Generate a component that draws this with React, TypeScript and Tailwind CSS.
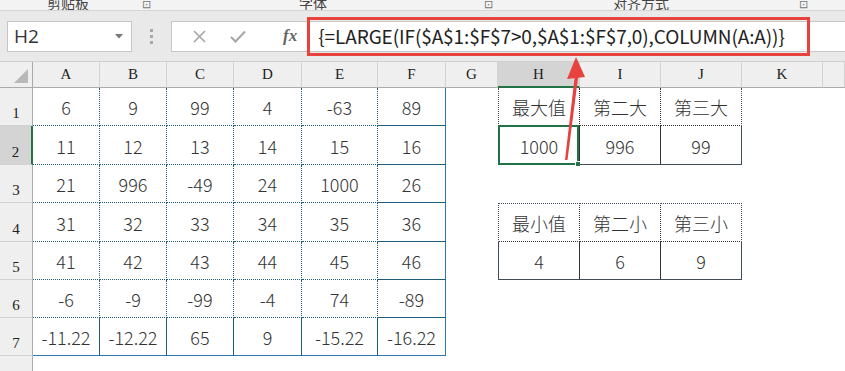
import React from "react";

const cols = ["A", "B", "C", "D", "E", "F", "G", "H", "I", "J", "K", ""];

const data = [
  ["6", "9", "99", "4", "-63", "89"],
  ["11", "12", "13", "14", "15", "16"],
  ["21", "996", "-49", "24", "1000", "26"],
  ["31", "32", "33", "34", "35", "36"],
  ["41", "42", "43", "44", "45", "46"],
  ["-6", "-9", "-99", "-4", "74", "-89"],
  ["-11.22", "-12.22", "65", "9", "-15.22", "-16.22"],
];

// right side summary tables, keyed by row index (0 based)
const side: Record<number, string[]> = {
  0: ["最大值", "第二大", "第三大"],
  1: ["1000", "996", "99"],
  3: ["最小值", "第二小", "第三小"],
  4: ["4", "6", "9"],
};

const rowHeights = ["h-[38px]", "h-[39px]", "h-[38px]", "h-[39px]", "h-[38px]", "h-[38px]", "h-[38px]"];

const cellFont = "font-['Noto_Sans_CJK_SC','Noto_Sans',sans-serif] font-light text-[18px] text-[#333]";
const headFont = "font-['Liberation_Serif','DejaVu_Serif',serif] text-[15px] text-[#222]";

function Ribbon() {
  return (
    <div className="flex h-[11px] items-end overflow-hidden border-b border-[#d6d6d6] bg-[#f3f3f3] text-[14px] leading-[18px] text-[#444] font-['Noto_Sans_CJK_SC',sans-serif]">
      <span className="ml-[47px] -mb-[2px]">剪贴板</span>
      <span className="ml-[53px] -mb-[2px] text-[11px] text-[#777]">⊡</span>
      <span className="ml-[148px] -mb-[2px]">字体</span>
      <span className="ml-[157px] -mb-[2px] text-[11px] text-[#777]">⊡</span>
      <span className="ml-[120px] -mb-[2px]">对齐方式</span>
      <span className="ml-[130px] -mb-[2px] text-[11px] text-[#777]">⊡</span>
    </div>
  );
}

function FormulaBar() {
  return (
    <div className="flex h-[51px] items-center border-b border-[#d0d0d0] bg-[#e9e9e9]">
      <div className="ml-[7px] flex h-[31px] w-[125px] items-center justify-between border border-[#c6c6c6] bg-white pl-[6px] pr-[8px]">
        <span className="font-['Open_Sans',sans-serif] text-[19px] text-[#333]">H2</span>
        <svg width="8" height="5" viewBox="0 0 8 5">
          <path d="M0 0 L8 0 L4 4.5 Z" fill="#777" />
        </svg>
      </div>
      <div className="ml-[18px] flex flex-col gap-[3px]">
        <span className="h-[3px] w-[3px] bg-[#a8a8a8]" />
        <span className="h-[3px] w-[3px] bg-[#a8a8a8]" />
        <span className="h-[3px] w-[3px] bg-[#a8a8a8]" />
      </div>
      <div className="ml-[18px] flex h-[31px] flex-1 items-center border border-y-[#c6c6c6] border-l-[#c6c6c6] border-r-0 bg-white">
        <svg className="ml-[21px]" width="13" height="13" viewBox="0 0 13 13">
          <path d="M1 1 L12 12 M12 1 L1 12" stroke="#a6a6a6" strokeWidth="1.6" />
        </svg>
        <svg className="ml-[24px]" width="16" height="13" viewBox="0 0 16 13">
          <path d="M1 7 L5.5 11.5 L15 1.5" stroke="#a6a6a6" strokeWidth="2" fill="none" />
        </svg>
        <span className="ml-[37px] font-['Liberation_Serif',serif] text-[17px] font-bold italic text-[#666]">fx</span>
        <div className="ml-[10px] flex h-[39px] w-[503px] items-center border-[3px] border-[#e8423f] pl-[8px]">
          <span className="whitespace-nowrap font-['Noto_Sans_CJK_SC','Noto_Sans',sans-serif] text-[19px] tracking-[-0.1px] text-[#222]">
            {"{=LARGE(IF($A$1:$F$7>0,$A$1:$F$7,0),COLUMN(A:A))}"}
          </span>
        </div>
      </div>
    </div>
  );
}

function HeaderRow() {
  return (
    <>
      <div className="relative h-[26px] border-b border-r border-[#ababab] bg-[#efefef]">
        <svg className="absolute bottom-[4px] right-[4px]" width="14" height="14" viewBox="0 0 14 14">
          <path d="M14 0 L14 14 L0 14 Z" fill="#b9b9b9" />
        </svg>
      </div>
      {cols.map((c, i) => (
        <div
          key={i}
          className={`flex h-[26px] items-center justify-center border-r border-[#d2d2d2] ${headFont} ${
            c === "H" ? "border-b-2 border-b-[#217346] bg-[#d4d4d4]" : "border-b border-b-[#ababab] bg-[#efefef]"
          }`}
        >
          {c}
        </div>
      ))}
    </>
  );
}

function sideBorder(r: number, ci: number) {
  // ci: 0..2 for H..J
  const cls: string[] = [];
  const top = r === 0 || r === 3;
  const bottom = r === 1 || r === 4;
  if (ci === 0) cls.push("border-l border-l-[#3f4d5a]");
  cls.push(ci === 2 ? "border-r border-r-[#3f4d5a]" : "border-r border-dotted border-r-[#333]");
  if (top) cls.push("border-b border-dotted border-b-[#333]");
  if (bottom) cls.push("border-b border-solid border-b-[#3f4d5a]");
  if (r === 3) cls.push("border-t border-t-[#3f4d5a]");
  return cls.join(" ");
}

function DataRow({ r }: { r: number }) {
  const h = rowHeights[r];
  const last = r === data.length - 1;
  return (
    <>
      <div
        className={`${h} flex items-end justify-center pb-[1px] ${headFont} ${
          r === 1 ? "border-r-2 border-r-[#217346] bg-[#d4d4d4]" : "border-r border-r-[#ababab] bg-[#efefef]"
        } border-b border-b-[#d2d2d2]`}
      >
        {r + 1}
      </div>
      {data[r].map((v, ci) => (
        <div
          key={ci}
          className={`${h} flex items-center justify-center pt-[2px] ${cellFont} ${
            ci === 5 ? "border-r border-solid border-r-[#2e75b6]" : "border-r border-dotted border-r-[#1f5c7c]"
          } ${last ? "border-b border-solid border-b-[#2e75b6]" : "border-b border-dotted border-b-[#1f5c7c]"}`}
        >
          {v}
        </div>
      ))}
      <div className={h} />
      {[0, 1, 2].map((ci) => {
        const txt = side[r]?.[ci];
        const sel = r === 1 && ci === 0;
        return (
          <div
            key={ci}
            className={`${h} relative flex items-center justify-center pt-[2px] ${cellFont} ${
              txt !== undefined ? sideBorder(r, ci) : ""
            }`}
          >
            {txt}
            {sel && (
              <div className="pointer-events-none absolute -left-[1px] -top-[1px] h-[calc(100%+2px)] w-[calc(100%+1px)] border-2 border-[#217346]">
                <div className="absolute -bottom-[4px] -right-[4px] h-[6px] w-[6px] border border-white bg-[#217346]" />
              </div>
            )}
          </div>
        );
      })}
      <div className={h} />
      <div className={h} />
    </>
  );
}

export default function App() {
  return (
    <div className="relative h-[371px] w-[845px] overflow-hidden bg-white">
      <Ribbon />
      <FormulaBar />
      <div className="grid grid-cols-[33px_67px_67px_67px_68px_76px_68px_52px_82px_81px_81px_81px_1fr]">
        <HeaderRow />
        {data.map((_, r) => (
          <DataRow key={r} r={r} />
        ))}
        <div className="h-[20px] border-r border-[#ababab] bg-[#efefef]" />
      </div>
      <svg className="pointer-events-none absolute left-0 top-0" width="845" height="371">
        <polygon points="565,160 567.5,160 578.5,74 575,74" fill="#e8423f" />
        <polygon points="576,57 567,79 585,77" fill="#e8423f" />
      </svg>
    </div>
  );
}
